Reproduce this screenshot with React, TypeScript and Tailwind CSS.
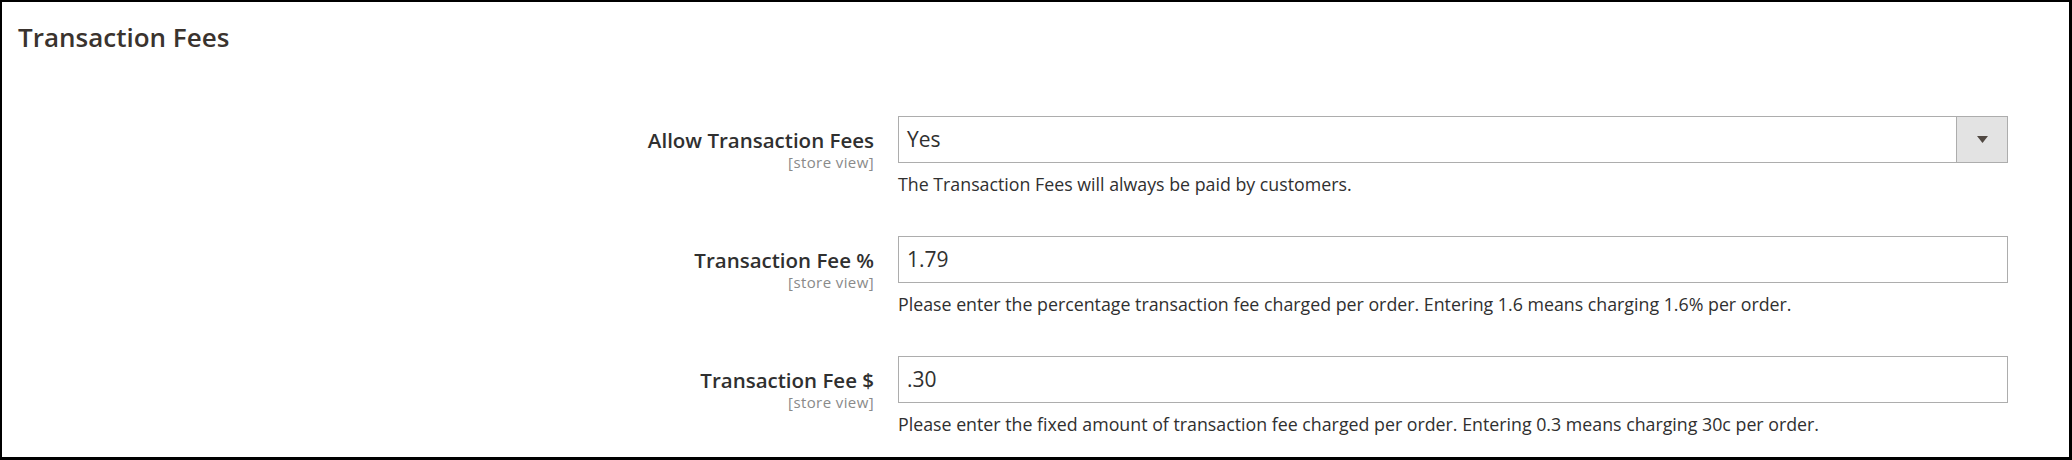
const rows = [
    {
        label: 'Allow Transaction Fees',
        value: 'Yes',
        select: true,
        note: 'The Transaction Fees will always be paid by customers.',
    },
    {
        label: 'Transaction Fee %',
        value: '1.79',
        select: false,
        note: 'Please enter the percentage transaction fee charged per order. Entering 1.6 means charging 1.6% per order.',
    },
    {
        label: 'Transaction Fee $',
        value: '.30',
        select: false,
        note: 'Please enter the fixed amount of transaction fee charged per order. Entering 0.3 means charging 30c per order.',
    },
];

const App = () => {
    return (
        <div className="w-[2072px] h-[460px] bg-white border-black border-l-2 border-t-2 border-r-[3px] border-b-[3px] font-['Open_Sans',sans-serif] overflow-hidden">

            {/* Section title */}
            <h2 className="pl-4 pt-[18px] text-[26px] leading-[34px] font-semibold text-[#3a332e]">
                Transaction Fees
            </h2>

            <div className="mt-[62px] flex flex-col gap-[41px]">
                {rows.map((row) => (
                    <div key={row.label} className="flex items-start">
                        <div className="w-[872px] text-right pt-[11px]">
                            <p className="text-[20.5px] leading-[26px] font-semibold text-[#303030]">{row.label}</p>
                            <p className="text-[15px] leading-[18px] tracking-[0.4px] text-[#8a8a8a]">[store view]</p>
                        </div>
                        <div className="ml-6 w-[1110px]">
                            <div className="h-[47px] flex border border-[#adadad] bg-white">
                                <div className="flex-1 flex items-center pl-2 text-[21px] text-[#303030]">
                                    {row.value}
                                </div>
                                {row.select && (
                                    <div className="w-[51px] border-l border-[#adadad] bg-[#e3e3e3] flex items-center justify-center">
                                        <svg width="11" height="7" viewBox="0 0 11 7">
                                            <path d="M0 0 H11 L5.5 7 Z" fill="#514943" />
                                        </svg>
                                    </div>
                                )}
                            </div>
                            <p className="mt-[10px] text-[17.8px] leading-[22px] text-[#303030]">{row.note}</p>
                        </div>
                    </div>
                ))}
            </div>
        </div>
    );
};

export default App;
